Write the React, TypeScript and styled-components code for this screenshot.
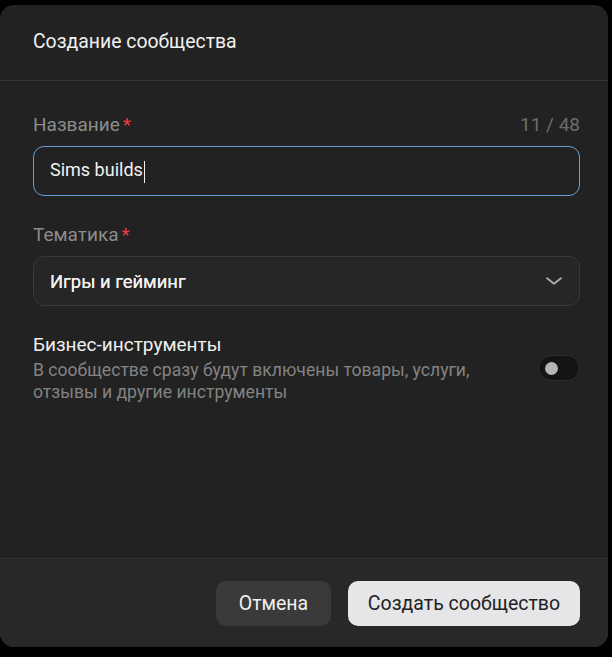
import React from "react";
import styled, { createGlobalStyle } from "styled-components";

const GlobalStyle = createGlobalStyle`
  html, body {
    margin: 0;
    padding: 0;
    background: #000;
    font-family: Roboto, "Noto Sans", "Liberation Sans", sans-serif;
  }
`;

const Backdrop = styled.div`
  width: 612px;
  height: 657px;
  background: #000;
  padding-top: 5px;
  box-sizing: border-box;
  overflow: hidden;
`;

const Modal = styled.div`
  width: 608px;
  height: 642px;
  background: #222222;
  border-radius: 14px;
  display: flex;
  flex-direction: column;
  overflow: hidden;
`;

const Header = styled.div`
  height: 76px;
  display: flex;
  align-items: center;
  padding: 0 33px 3px;
  box-sizing: border-box;
  border-bottom: 1px solid #343434;
  flex-shrink: 0;
`;

const Title = styled.h2`
  margin: 0;
  color: #f0f0f0;
  font-size: 19.4px;
  font-weight: 400;
`;

const Body = styled.div`
  flex: 1;
  padding: 32px 28px 0 33px;
  display: flex;
  flex-direction: column;
`;

const LabelRow = styled.div`
  display: flex;
  justify-content: space-between;
  align-items: center;
  height: 22px;
  margin-bottom: 11px;
`;

const Label = styled.span`
  color: #8c8c8c;
  font-size: 19px;
`;

const Required = styled.span`
  color: #f03c3c;
  margin-left: 3px;
`;

const Counter = styled.span`
  color: #6c6c6c;
  font-size: 19px;
`;

const Field = styled.div<{ $focused?: boolean }>`
  height: 50px;
  box-sizing: border-box;
  border-radius: 11px;
  border: 1px solid ${(p) => (p.$focused ? "#6a9fd6" : "#393939")};
  background: ${(p) => (p.$focused ? "#222222" : "#262626")};
  display: flex;
  align-items: center;
  justify-content: space-between;
  padding: 0 14px 0 16px;
  color: #f2f2f2;
  font-size: 18px;
  margin-bottom: 27px;
`;

const Caret = styled.span`
  display: inline-block;
  width: 1.5px;
  height: 22px;
  background: #f2f2f2;
  margin-left: 1px;
  vertical-align: middle;
`;

const SelectValue = styled.span`
  font-size: 18.4px;
  text-shadow: 0 0 0.4px #f2f2f2;
`;

const SwitchRow = styled.div`
  display: flex;
  align-items: center;
  justify-content: space-between;
`;

const SwitchText = styled.div`
  display: flex;
  flex-direction: column;
`;

const SwitchTitle = styled.div`
  color: #f0f0f0;
  font-size: 19px;
  line-height: 24px;
`;

const SwitchHint = styled.div`
  color: #838383;
  font-size: 17.6px;
  line-height: 22px;
  margin-top: 2px;
  width: 470px;
`;

const Toggle = styled.div`
  width: 42px;
  height: 26px;
  box-sizing: border-box;
  border-radius: 13px;
  background: #141414;
  border: 1px solid #2e2e2e;
  display: flex;
  align-items: center;
  padding-left: 6px;
  flex-shrink: 0;
`;

const Knob = styled.span`
  width: 13px;
  height: 13px;
  border-radius: 50%;
  background: #b4b4b4;
`;

const Footer = styled.div`
  height: 89px;
  box-sizing: border-box;
  border-top: 1px solid #343434;
  background: #282828;
  display: flex;
  justify-content: flex-end;
  align-items: flex-start;
  gap: 17px;
  padding: 22px 28px 0 0;
  flex-shrink: 0;
`;

const Button = styled.button<{ $primary?: boolean }>`
  height: 45px;
  border: none;
  border-radius: 10px;
  padding: 0;
  font-family: inherit;
  font-size: 19.5px;
  background: ${(p) => (p.$primary ? "#e6e6e9" : "#3a3a3a")};
  color: ${(p) => (p.$primary ? "#222" : "#f0f0f0")};
  width: ${(p) => (p.$primary ? "232px" : "115px")};
  cursor: pointer;
`;

const Chevron = () => (
  <svg width="22" height="22" viewBox="0 0 24 24" fill="none">
    <path
      d="M4.5 9l7.5 6 7.5-6"
      stroke="#a8a8a8"
      strokeWidth="2.2"
      strokeLinecap="round"
      strokeLinejoin="round"
    />
  </svg>
);

export default function App() {
  return (
    <>
      <GlobalStyle />
      <Backdrop>
        <Modal>
          <Header>
            <Title>Создание сообщества</Title>
          </Header>
          <Body>
            <LabelRow>
              <Label>
                Название<Required>*</Required>
              </Label>
              <Counter>11 / 48</Counter>
            </LabelRow>
            <Field $focused>
              <span>
                Sims builds
                <Caret />
              </span>
            </Field>
            <LabelRow>
              <Label>
                Тематика<Required>*</Required>
              </Label>
            </LabelRow>
            <Field>
              <SelectValue>Игры и гейминг</SelectValue>
              <Chevron />
            </Field>
            <SwitchRow>
              <SwitchText>
                <SwitchTitle>Бизнес-инструменты</SwitchTitle>
                <SwitchHint>
                  В сообществе сразу будут включены товары, услуги, отзывы и
                  другие инструменты
                </SwitchHint>
              </SwitchText>
              <Toggle>
                <Knob />
              </Toggle>
            </SwitchRow>
          </Body>
          <Footer>
            <Button>Отмена</Button>
            <Button $primary>Создать сообщество</Button>
          </Footer>
        </Modal>
      </Backdrop>
    </>
  );
}
